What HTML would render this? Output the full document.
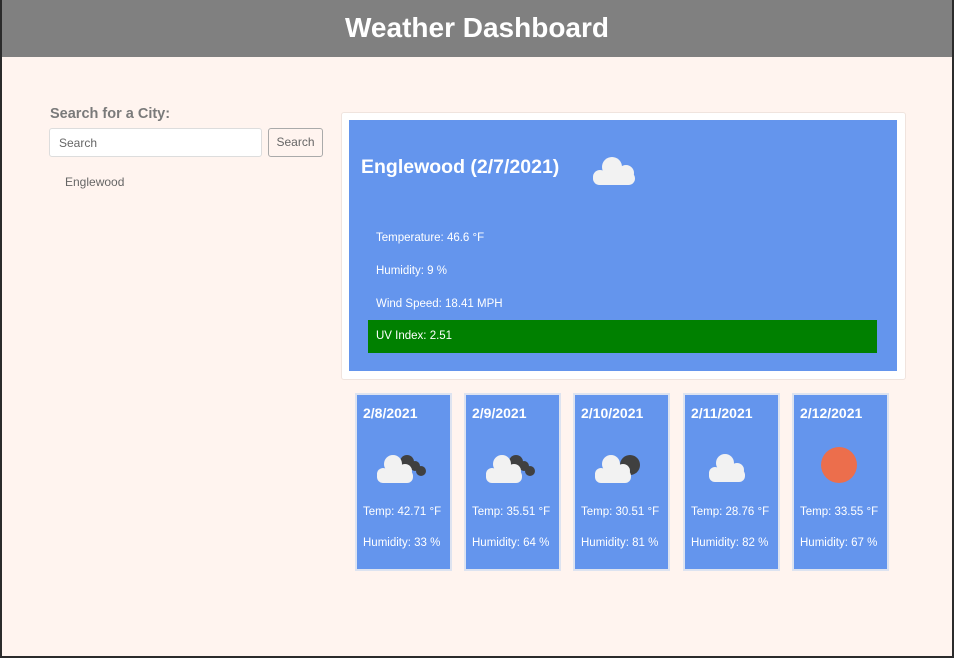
<!DOCTYPE html>
<html><head><style>
*{box-sizing:border-box;margin:0;padding:0}
body{width:954px;height:658px;background:#fff4ef;font-family:"Liberation Sans",sans-serif;position:relative;overflow:hidden}
.frame{position:absolute;left:0;top:0;width:954px;height:658px;border-left:2px solid #2b2b2b;border-right:2px solid #2b2b2b;border-bottom:2px solid #2b2b2b;pointer-events:none}
.hdr{position:absolute;left:0;top:0;width:954px;height:57px;background:#808080;color:#fff;font-weight:bold;font-size:28px;text-align:center;line-height:55px}
.abs{position:absolute}
.lbl{left:50px;top:106px;font-size:14.5px;font-weight:bold;color:#7a7a7a}
.inp{left:49px;top:128px;width:213px;height:29px;background:#fff;border:1px solid #ddd;border-radius:3px;font-size:12px;color:#666;padding:7px 9px}
.btn{left:268px;top:128px;width:55px;height:29px;border:1px solid #aaa;border-radius:3px;font-size:12px;color:#666;text-align:center;line-height:27px}
.city{left:65px;top:175px;font-size:12px;color:#666}
.outer{left:341px;top:112px;width:565px;height:268px;background:#fff;border:1px solid #f0e4de;border-radius:3px}
.inner{left:349px;top:120px;width:548px;height:251px;background:#6495ed;color:#fff}
.inner h2{position:absolute;left:12px;top:36px;font-size:19.5px;font-weight:bold}
.inner p{position:absolute;left:27px;font-size:11.5px}
.uv{position:absolute;left:19px;top:200px;width:509px;height:33px;background:#008000;font-size:11.5px;padding:10px 8px}
.card{position:absolute;top:393px;width:97px;height:178px;background:#6495ed;border:2px solid #dde3f0;color:#fff}
.card h3{position:absolute;left:6px;top:10px;font-size:14px;font-weight:bold}
.card p{position:absolute;left:6px;font-size:11.5px}
.card svg{position:absolute;left:18px;top:50px}
</style></head><body>
<div class="hdr">Weather Dashboard</div>
<div class="abs lbl">Search for a City:</div>
<div class="abs inp">Search</div>
<div class="abs btn">Search</div>
<div class="abs city">Englewood</div>
<div class="abs outer"></div>
<div class="abs inner">
<h2>Englewood (2/7/2021)</h2>
<svg style="position:absolute;left:242px;top:34px" width="48" height="32" viewBox="0 0 48 32"><g fill="#f2f2f2"><circle cx="21" cy="13" r="10"/><circle cx="9" cy="23" r="7"/><circle cx="35" cy="19" r="8"/><rect x="2" y="18" width="42" height="13" rx="6.5"/></g></svg>
<p style="top:112px">Temperature: 46.6 °F</p>
<p style="top:145px">Humidity: 9 %</p>
<p style="top:178px">Wind Speed: 18.41 MPH</p>
<div class="uv">UV Index: 2.51</div>
</div>

<div class="card" style="left:355px"><h3>2/8/2021</h3>
<svg width="60" height="40" viewBox="0 0 60 40"><g fill="#404040"><circle cx="32" cy="17" r="7"/><circle cx="40" cy="21" r="5"/><circle cx="46" cy="26" r="5"/></g><g fill="#f2f2f2"><circle cx="18" cy="19" r="9"/><circle cx="8" cy="29" r="6"/><circle cx="30" cy="26" r="7"/><rect x="2" y="25" width="36" height="13" rx="6"/></g></svg>
<p style="top:111px">Temp: 42.71 °F</p><p style="top:142px">Humidity: 33 %</p></div>
<div class="card" style="left:464px"><h3>2/9/2021</h3>
<svg width="60" height="40" viewBox="0 0 60 40"><g fill="#404040"><circle cx="32" cy="17" r="7"/><circle cx="40" cy="21" r="5"/><circle cx="46" cy="26" r="5"/></g><g fill="#f2f2f2"><circle cx="18" cy="19" r="9"/><circle cx="8" cy="29" r="6"/><circle cx="30" cy="26" r="7"/><rect x="2" y="25" width="36" height="13" rx="6"/></g></svg>
<p style="top:111px">Temp: 35.51 °F</p><p style="top:142px">Humidity: 64 %</p></div>
<div class="card" style="left:573px"><h3>2/10/2021</h3>
<svg width="60" height="40" viewBox="0 0 60 40"><circle cx="37" cy="20" r="10" fill="#404040"/><g fill="#f2f2f2"><circle cx="18" cy="19" r="9"/><circle cx="8" cy="29" r="6"/><circle cx="30" cy="26" r="7"/><rect x="2" y="25" width="36" height="13" rx="6"/></g></svg>
<p style="top:111px">Temp: 30.51 °F</p><p style="top:142px">Humidity: 81 %</p></div>
<div class="card" style="left:683px"><h3>2/11/2021</h3>
<svg width="60" height="40" viewBox="0 0 60 40"><g fill="#f2f2f2"><circle cx="22" cy="18" r="9"/><circle cx="12" cy="28" r="6"/><circle cx="34" cy="25" r="7"/><rect x="6" y="24" width="36" height="13" rx="6"/></g></svg>
<p style="top:111px">Temp: 28.76 °F</p><p style="top:142px">Humidity: 82 %</p></div>
<div class="card" style="left:792px"><h3>2/12/2021</h3>
<svg width="60" height="40" viewBox="0 0 60 40"><circle cx="27" cy="20" r="18" fill="#ec6e4c"/></svg>
<p style="top:111px">Temp: 33.55 °F</p><p style="top:142px">Humidity: 67 %</p></div>
<div class="frame"></div>
</body></html>
